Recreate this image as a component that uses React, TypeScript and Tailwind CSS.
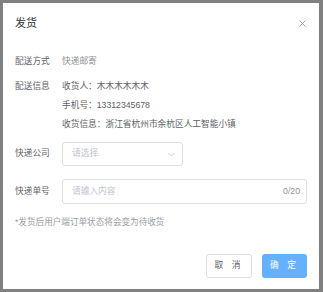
import React from "react";

const font = { fontFamily: '"Liberation Sans", "Noto Sans CJK SC", sans-serif' };

export default function App() {
  return (
    <div className="w-[323px] h-[292px] bg-[#808080] pt-[3px] pl-[3px]" style={font}>
      <div className="w-[316px] h-[286px] bg-white flex flex-col px-[12px]">
        {/* header */}
        <div className="h-[40px] flex items-center justify-between">
          <span className="text-[11px] text-[#303133] leading-none">发货</span>
          <svg width="7" height="7" viewBox="0 0 7 7" className="mr-[1px]">
            <path d="M0.5 0.5 L6.5 6.5 M6.5 0.5 L0.5 6.5" stroke="#a0a3a8" strokeWidth="0.9" />
          </svg>
        </div>

        <div className="mt-[9px] flex text-[8.7px] leading-[19px]">
          <span className="w-[47px] text-[#606266]">配送方式</span>
          <span className="text-[#8d9096]">快递邮寄</span>
        </div>

        <div className="mt-[6px] flex text-[8.7px] leading-[19px]">
          <span className="w-[47px] text-[#606266]">配送信息</span>
          <div className="flex flex-col text-[#606266]">
            <span>收货人：木木木木木木</span>
            <span>手机号：13312345678</span>
            <span>收货信息：浙江省杭州市余杭区人工智能小镇</span>
          </div>
        </div>

        <div className="mt-[8px] flex items-center text-[8.7px]">
          <span className="w-[47px] text-[#606266]">快递公司</span>
          <div className="w-[121px] h-[24px] border border-[#dcdfe6] rounded-[3px] flex items-center justify-between pl-[9px] pr-[7px]">
            <span className="text-[#c0c4cc]">请选择</span>
            <svg width="7" height="5" viewBox="0 0 7 5">
              <path d="M0.5 1 L3.5 4 L6.5 1" fill="none" stroke="#c0c4cc" strokeWidth="0.8" />
            </svg>
          </div>
        </div>

        <div className="mt-[13px] flex items-center text-[8.7px]">
          <span className="w-[47px] text-[#606266]">快递单号</span>
          <div className="flex-1 h-[25px] border border-[#dcdfe6] rounded-[3px] flex items-center justify-between pl-[9px] pr-[6px]">
            <span className="text-[#c0c4cc]">请输入内容</span>
            <span className="text-[#909399]">0/20</span>
          </div>
        </div>

        <div className="mt-[9px] text-[8.6px] leading-[19px] text-[#9a9da3]">
          *发货后用户端订单状态将会变为待收货
        </div>

        <div className="mt-[22px] flex justify-end gap-[10px]">
          <button className="w-[46px] h-[24px] border border-[#dcdfe6] rounded-[3px] bg-white text-[8.7px] text-[#606266] flex items-center justify-center">
            <span className="tracking-[3px]">取 消</span>
          </button>
          <button className="w-[45px] h-[24px] rounded-[3px] bg-[#66b1ff] text-[8.7px] text-white flex items-center justify-center">
            <span className="tracking-[3px]">确 定</span>
          </button>
        </div>
      </div>
    </div>
  );
}
